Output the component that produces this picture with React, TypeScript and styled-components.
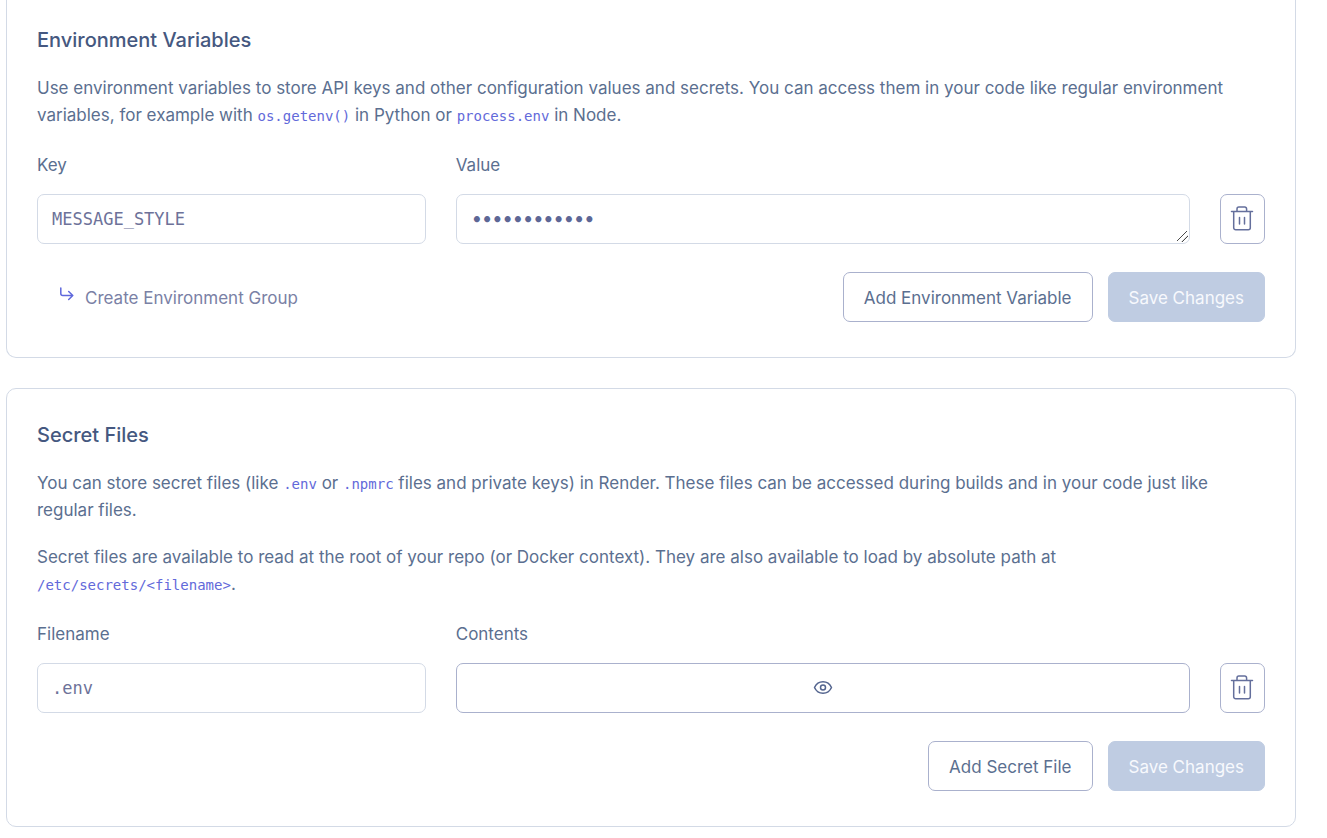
import React from 'react';
import styled, { createGlobalStyle } from 'styled-components';

const sans = "Inter, 'Open Sans', sans-serif";
const mono = "'DejaVu Sans Mono', monospace";

const color = {
  heading: '#455880',
  text: '#5b6f90',
  muted: '#7a81a5',
  code: '#6269da',
  field: '#6d7299',
  line: '#d3dae6',
  outline: '#aab1cd',
  disabled: '#bfcce2',
};

const GlobalStyle = createGlobalStyle`
  *, *::before, *::after { box-sizing: border-box; }
  body {
    margin: 0;
    background: #ffffff;
    color: ${color.text};
    font: 400 17px/27px ${sans};
  }
`;

const Page = styled.main`
  display: flex;
  flex-direction: column;
  gap: 30px;
  padding: 0 31px 11px 6px;
`;

const Card = styled.section<{ $continued?: boolean }>`
  display: flex;
  flex-direction: column;
  padding: ${p => (p.$continued ? '27px 30px 35px' : '33px 30px 35px')};
  border: 1px solid ${color.line};
  border-top-width: ${p => (p.$continued ? '0' : '1px')};
  border-radius: ${p => (p.$continued ? '0 0 10px 10px' : '10px')};
`;

const Title = styled.h2`
  margin: 0 0 21px;
  color: ${color.heading};
  font-size: 20px;
  font-weight: 500;
  line-height: 27px;
`;

const Copy = styled.div`
  display: flex;
  flex-direction: column;
  gap: 20px;
  max-width: 1218px;
  margin-bottom: 23px;
`;

const Paragraph = styled.p`
  margin: 0;
`;

const Code = styled.code`
  color: ${color.code};
  font: 400 14px/20px ${mono};
  white-space: nowrap;
`;

const FieldGrid = styled.div`
  display: grid;
  grid-template-columns: minmax(0, 9fr) minmax(0, 17fr) 45px;
  column-gap: 30px;
  align-items: end;
`;

const Field = styled.div`
  display: flex;
  flex-direction: column;
  gap: 15px;
`;

const TextInput = styled.input`
  width: 100%;
  height: 50px;
  padding: 0 14px;
  border: 1px solid ${color.line};
  border-radius: 7px;
  background: #ffffff;
  color: ${color.field};
  font: 400 17px/24px ${mono};
`;

const SecretArea = styled.textarea`
  display: block;
  width: 100%;
  height: 50px;
  padding: 13px 15px 11px;
  overflow: hidden;
  resize: vertical;
  border: 1px solid ${color.line};
  border-radius: 7px;
  background: #ffffff;
  color: #5d6796;
  font: 700 17px/24px ${mono};
  -webkit-text-security: disc;

  &::-webkit-resizer {
    background: linear-gradient(135deg, transparent 41%, #4a4a4a 42%, #4a4a4a 48%, transparent 49%, transparent 68%, #4a4a4a 69%, #4a4a4a 75%, transparent 76%) 3px 3px / 11px 11px no-repeat;
  }
`;

const Button = styled.button<{ $icon?: boolean }>`
  display: inline-flex;
  align-items: center;
  justify-content: center;
  height: 50px;
  padding: ${p => (p.$icon ? '0' : '2px 20px 0')};
  border: 1px solid ${color.outline};
  border-radius: 7px;
  background: #ffffff;
  color: ${color.text};
  font: inherit;
  white-space: nowrap;
  cursor: pointer;

  &:disabled {
    border-color: ${color.disabled};
    background: ${color.disabled};
    color: #f7f9fd;
    cursor: default;
  }
`;

const Footer = styled.div`
  display: flex;
  align-items: center;
  gap: 15px;
  margin-top: 28px;
`;

const Actions = styled.div`
  display: flex;
  gap: 15px;
  margin-left: auto;
`;

const GroupLink = styled.a`
  display: inline-flex;
  align-items: center;
  gap: 11px;
  padding: 2px 0 0 22px;
  color: ${color.muted};
  text-decoration: none;
`;

const TrashIcon = () => (
  <svg width="25" height="26" viewBox="0 0 25 26" fill="none" stroke="#646f9c" strokeWidth="1.5" strokeLinecap="round" strokeLinejoin="round" aria-hidden="true">
    <path d="M1.500 5.500h21M7 5.500V2.900a1.800 1.800 0 0 1 1.800-1.800h6a1.800 1.800 0 0 1 1.800 1.800v2.600M3.700 5.500V21.700a2 2 0 0 0 2 2h12.600a2 2 0 0 0 2-2V5.500M9.500 11.500v6.500M14.500 11.500v6.500" />
  </svg>
);

const EyeIcon = () => (
  <svg width="20" height="16" viewBox="0 0 20 16" fill="none" stroke="#54658f" strokeWidth="1.5" strokeLinejoin="round" aria-hidden="true">
    <path d="M1.500 7.500C3.300 3.500 6.300 1.700 10 1.700S16.700 3.500 18.500 7.500C16.700 11.500 13.700 13.300 10 13.300S3.300 11.500 1.500 7.500Z" />
    <circle cx="10" cy="7.500" r="2.500" />
  </svg>
);

const BranchIcon = () => (
  <svg width="15" height="22" viewBox="0 0 15 22" fill="none" stroke="#5f68dc" strokeWidth="1.5" strokeLinecap="round" strokeLinejoin="round" aria-hidden="true">
    <path d="M1.800 1v5.500a2 2 0 0 0 2 2h10M9.700 4.500l4.100 4-4.100 4" />
  </svg>
);

export default function App() {
  return (
    <>
      <GlobalStyle />
      <Page>
        <Card $continued>
          <Title>Environment Variables</Title>
          <Copy>
            <Paragraph>
              Use environment variables to store API keys and other configuration values and secrets. You can access
              them in your code like regular environment variables, for example with <Code>os.getenv()</Code> in Python
              or <Code>process.env</Code> in Node.
            </Paragraph>
          </Copy>
          <FieldGrid>
            <Field>
              <label htmlFor="env-key">Key</label>
              <TextInput id="env-key" defaultValue="MESSAGE_STYLE" spellCheck={false} />
            </Field>
            <Field>
              <label htmlFor="env-value">Value</label>
              <SecretArea id="env-value" rows={1} defaultValue="enthusiastic" spellCheck={false} />
            </Field>
            <Button $icon type="button" aria-label="Delete variable">
              <TrashIcon />
            </Button>
          </FieldGrid>
          <Footer>
            <GroupLink href="#environment-group">
              <BranchIcon />
              Create Environment Group
            </GroupLink>
            <Actions>
              <Button type="button">Add Environment Variable</Button>
              <Button type="button" disabled>Save Changes</Button>
            </Actions>
          </Footer>
        </Card>

        <Card>
          <Title>Secret Files</Title>
          <Copy>
            <Paragraph>
              You can store secret files (like <Code>.env</Code> or <Code>.npmrc</Code> files and private keys) in
              Render. These files can be accessed during builds and in your code just like regular files.
            </Paragraph>
            <Paragraph>
              Secret files are available to read at the root of your repo (or Docker context). They are also available
              to load by absolute path at <Code>/etc/secrets/&lt;filename&gt;</Code>.
            </Paragraph>
          </Copy>
          <FieldGrid>
            <Field>
              <label htmlFor="file-name">Filename</label>
              <TextInput id="file-name" defaultValue=".env" spellCheck={false} />
            </Field>
            <Field>
              <label htmlFor="file-contents">Contents</label>
              <Button $icon id="file-contents" type="button">
                <EyeIcon />
              </Button>
            </Field>
            <Button $icon type="button" aria-label="Delete file">
              <TrashIcon />
            </Button>
          </FieldGrid>
          <Footer>
            <Actions>
              <Button type="button">Add Secret File</Button>
              <Button type="button" disabled>Save Changes</Button>
            </Actions>
          </Footer>
        </Card>
      </Page>
    </>
  );
}
